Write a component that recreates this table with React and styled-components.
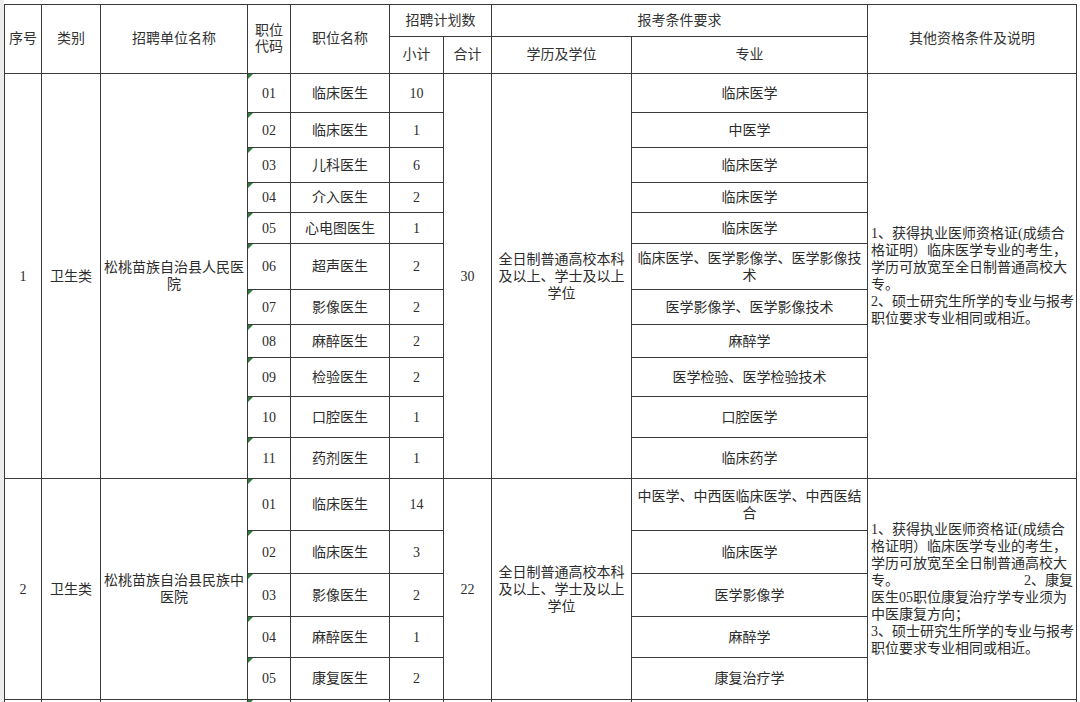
import React from 'react';
import styled, { createGlobalStyle } from 'styled-components';

const groups = [
  {
    no: '1',
    type: '卫生类',
    unit: '松桃苗族自治县人民医院',
    total: '30',
    edu: '全日制普通高校本科及以上、学士及以上学位',
    notes: [
      '1、获得执业医师资格证(成绩合',
      '格证明）临床医学专业的考生，',
      '学历可放宽至全日制普通高校大',
      '专。',
      '2、硕士研究生所学的专业与报考',
      '职位要求专业相同或相近。',
    ],
    posts: [
      ['01', '临床医生', '10', '临床医学'],
      ['02', '临床医生', '1', '中医学'],
      ['03', '儿科医生', '6', '临床医学'],
      ['04', '介入医生', '2', '临床医学'],
      ['05', '心电图医生', '1', '临床医学'],
      ['06', '超声医生', '2', '临床医学、医学影像学、医学影像技术'],
      ['07', '影像医生', '2', '医学影像学、医学影像技术'],
      ['08', '麻醉医生', '2', '麻醉学'],
      ['09', '检验医生', '2', '医学检验、医学检验技术'],
      ['10', '口腔医生', '1', '口腔医学'],
      ['11', '药剂医生', '1', '临床药学'],
    ],
  },
  {
    no: '2',
    type: '卫生类',
    unit: '松桃苗族自治县民族中医院',
    total: '22',
    edu: '全日制普通高校本科及以上、学士及以上学位',
    notes: [
      '1、获得执业医师资格证(成绩合',
      '格证明）临床医学专业的考生，',
      '学历可放宽至全日制普通高校大',
      ['专。', '2、康复'],
      '医生05职位康复治疗学专业须为',
      '中医康复方向；',
      '3、硕士研究生所学的专业与报考',
      '职位要求专业相同或相近。',
    ],
    posts: [
      ['01', '临床医生', '14', '中医学、中西医临床医学、中西医结合'],
      ['02', '临床医生', '3', '临床医学'],
      ['03', '影像医生', '2', '医学影像学'],
      ['04', '麻醉医生', '1', '麻醉学'],
      ['05', '康复医生', '2', '康复治疗学'],
    ],
  },
];

// row heights in px, header first, then every post row, then the cut-off row
const rowHeights = [31, 36, 38, 34, 34, 29, 30, 45, 34, 32, 38, 40, 40, 51, 42, 42, 40, 41, 30];

const App = () => {
  return (
    <>
      <GlobalStyle />
      <Page>
        <Gutter />
        <Sheet>
          <Grid>
            <HeadCell $rows={2}>序号</HeadCell>
            <HeadCell $rows={2}>类别</HeadCell>
            <HeadCell $rows={2}>招聘单位名称</HeadCell>
            <HeadCell $rows={2} $pad={5}>职位代码</HeadCell>
            <HeadCell $rows={2}>职位名称</HeadCell>
            <HeadCell $cols={2}>招聘计划数</HeadCell>
            <HeadCell $cols={2}>报考条件要求</HeadCell>
            <HeadCell $rows={2}>其他资格条件及说明</HeadCell>
            <HeadCell>小计</HeadCell>
            <HeadCell>合计</HeadCell>
            <HeadCell>学历及学位</HeadCell>
            <HeadCell>专业</HeadCell>

            {groups.map((g) =>
              g.posts.map(([code, name, count, major], i) => {
                const span = g.posts.length;
                return (
                  <React.Fragment key={g.no + code}>
                    {i === 0 && <Cell $rows={span}>{g.no}</Cell>}
                    {i === 0 && <Cell $rows={span}>{g.type}</Cell>}
                    {i === 0 && <Cell $rows={span}>{g.unit}</Cell>}
                    <CodeCell>{code}</CodeCell>
                    <Cell>{name}</Cell>
                    <Cell>{count}</Cell>
                    {i === 0 && <Cell $rows={span}>{g.total}</Cell>}
                    {i === 0 && <Cell $rows={span} $pad={4}>{g.edu}</Cell>}
                    <Cell>{major}</Cell>
                    {i === 0 && (
                      <NoteCell $rows={span}>
                        {g.notes.map((line, k) =>
                          Array.isArray(line) ? (
                            <SplitLine key={k}>
                              <span>{line[0]}</span>
                              <span>{line[1]}</span>
                            </SplitLine>
                          ) : (
                            <Line key={k}>{line}</Line>
                          )
                        )}
                      </NoteCell>
                    )}
                  </React.Fragment>
                );
              })
            )}

            <Cell />
            <Cell />
            <Cell />
            <CodeCell />
            <Cell />
            <Cell />
            <Cell />
            <Cell />
            <Cell />
            <Cell />
          </Grid>
        </Sheet>
      </Page>
    </>
  );
};

const GlobalStyle = createGlobalStyle`
  html, body {
    margin: 0;
    padding: 0;
    background: #fff;
    overflow: hidden;
  }
`;

const Page = styled.div`
  display: flex;
  width: 1080px;
  height: 702px;
  overflow: hidden;
  font-family: "Liberation Serif", "Noto Sans CJK SC", serif;
  color: #2c2c2c;
`;

const Gutter = styled.div`
  width: 4px;
  flex-shrink: 0;
  background: #ececec;
`;

const Sheet = styled.div`
  padding-top: 4px;
`;

const Grid = styled.div`
  display: grid;
  grid-template-columns: 36px 58px 146px 42px 98px 53px 47px 139px 235px 208px;
  grid-template-rows: ${rowHeights.map((h) => h + 'px').join(' ')};
  gap: 1px;
  padding: 1px;
  background: #3a3a3a;
`;

const Cell = styled.div`
  grid-row: span ${(p) => p.$rows || 1};
  grid-column: span ${(p) => p.$cols || 1};
  display: flex;
  align-items: center;
  justify-content: center;
  padding: 0 ${(p) => p.$pad || 2}px;
  background: #fff;
  font-size: 14px;
  line-height: 17px;
  text-align: center;
`;

const HeadCell = styled(Cell)`
  font-size: 14px;
  line-height: 16px;
  color: #333;
`;

const CodeCell = styled(Cell)`
  position: relative;

  &::before {
    content: '';
    position: absolute;
    top: 0;
    left: 0;
    border-top: 5px solid #2f7d3a;
    border-right: 5px solid transparent;
  }
`;

const NoteCell = styled(Cell)`
  flex-direction: column;
  align-items: stretch;
  justify-content: center;
  padding: 0 3px;
  text-align: left;
`;

const Line = styled.div`
  white-space: nowrap;
`;

const SplitLine = styled.div`
  display: flex;
  justify-content: space-between;
  white-space: nowrap;
`;

export default App;
